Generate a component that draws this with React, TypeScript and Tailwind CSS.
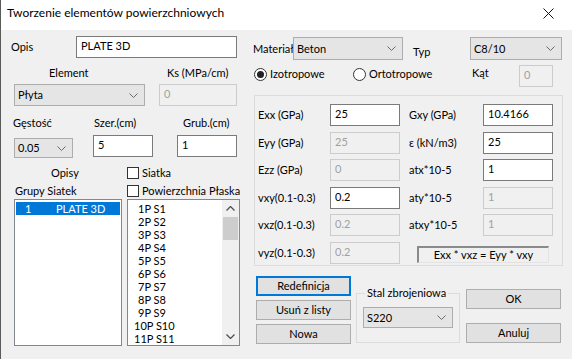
import React from "react";

const Chevron = () => (
  <svg width="9" height="5" viewBox="0 0 9 5" className="shrink-0">
    <polyline points="0.5,0.5 4.5,4.5 8.5,0.5" fill="none" stroke="#6a6a6a" strokeWidth="1" />
  </svg>
);

const Select = ({ value, className }: { value: string; className: string }) => (
  <div
    className={`flex items-center justify-between border border-[#adadad] bg-[#e5e5e5] pl-[3px] pr-[6px] ${className}`}
  >
    <span>{value}</span>
    <Chevron />
  </div>
);

const Field = ({ value, disabled, className }: { value: string; disabled?: boolean; className: string }) => (
  <div
    className={`flex h-[22px] items-center pb-[2px] pl-[4px] ${
      disabled ? "border border-[#cccccc] bg-[#f0f0f0] text-[#a0a0a0]" : "border border-[#7a7a7a] bg-white"
    } ${className}`}
  >
    {value}
  </div>
);

const Check = ({ label }: { label: string }) => (
  <div className="flex items-center">
    <div className="h-[12px] w-[12px] border border-[#333] bg-white" />
    <span className="ml-[3px]">{label}</span>
  </div>
);

const Radio = ({ label, on }: { label: string; on?: boolean }) => (
  <div className="flex items-center">
    <div className="flex h-[13px] w-[13px] items-center justify-center rounded-full border border-[#333] bg-white">
      {on && <div className="h-[7px] w-[7px] rounded-full bg-[#222]" />}
    </div>
    <span className="ml-[3px]">{label}</span>
  </div>
);

const Button = ({ label, focus, className }: { label: string; focus?: boolean; className?: string }) => (
  <div
    className={`flex h-[20px] items-center justify-center bg-[#e1e1e1] ${
      focus ? "border-2 border-[#0078d7]" : "border border-[#adadad]"
    } ${className ?? ""}`}
  >
    {label}
  </div>
);

const params: [string, string, boolean, string, string, boolean][] = [
  ["Exx (GPa)", "25", false, "Gxy (GPa)", "10.4166", false],
  ["Eyy (GPa)", "25", true, "ε (kN/m3)", "25", false],
  ["Ezz (GPa)", "0", true, "atx*10-5", "1", false],
  ["vxy(0.1-0.3)", "0.2", false, "aty*10-5", "1", true],
  ["vxz(0.1-0.3)", "0.2", true, "atxy*10-5", "1", true],
];

const meshes = Array.from({ length: 11 }, (_, i) => `${i + 1}P S${i + 1}`);

export default function App() {
  return (
    <div className="h-[359px] w-[572px] overflow-hidden border-l border-[#5a5a5a] bg-[#f0f0f0] font-['Lato',sans-serif] text-[11px] leading-[14px] text-black">
      {/* title bar */}
      <div className="flex h-[30px] items-center justify-between bg-white pl-[6px] pr-[18px] text-[12px]">
        <span className="pb-[4px]">Tworzenie elementów powierzchniowych</span>
        <svg width="11" height="11" viewBox="0 0 11 11" className="mb-[4px]">
          <path d="M0.5 0.5 L10.5 10.5 M10.5 0.5 L0.5 10.5" stroke="#111" strokeWidth="1" />
        </svg>
      </div>

      <div className="flex">
        {/* left column */}
        <div className="ml-[9px] w-[231px]">
          <div className="mt-[6px] flex h-[22px] items-center">
            <span className="w-[66px] pl-[1px]">Opis</span>
            <Field value="PLATE 3D" className="w-[161px]" />
          </div>
          <div className="mt-[7px] flex h-[16px] items-center">
            <span className="w-[157px] pl-[39px]">Element</span>
            <span>Ks (MPa/cm)</span>
          </div>
          <div className="mt-[3px] flex h-[22px] items-center">
            <Select value="Płyta" className="ml-[4px] h-[22px] w-[131px]" />
            <Field value="0" disabled className="ml-[14px] w-[78px]" />
          </div>
          <div className="mt-[9px] flex h-[16px] items-center">
            <span className="w-[84px] pl-[3px]">Gęstość</span>
            <span className="w-[89px]">Szer.(cm)</span>
            <span>Grub.(cm)</span>
          </div>
          <div className="mt-[4px] flex h-[23px] items-start">
            <Select value="0.05" className="ml-[4px] mt-[3px] h-[20px] w-[59px]" />
            <Field value="5" className="ml-[20px] w-[60px]" />
            <Field value="1" className="ml-[24px] w-[60px]" />
          </div>
          <div className="mt-[6px] flex h-[18px] items-center">
            <span className="w-[117px] pl-[41px]">Opisy</span>
            <Check label="Siatka" />
          </div>
          <div className="flex h-[17px] items-center">
            <span className="w-[117px] pl-[5px]">Grupy Siatek</span>
            <Check label="Powierzchnia Płaska" />
          </div>
          <div className="flex">
            <div className="ml-[4px] h-[147px] w-[108px] border border-[#828790] bg-white pt-[2px]">
              <div className="mx-[1px] flex h-[13px] items-center bg-[#0078d7] text-white">
                <span className="w-[40px] pl-[9px]">1</span>
                <span>PLATE 3D</span>
              </div>
            </div>
            <div className="ml-[5px] flex h-[147px] w-[113px] border border-[#828790] bg-white">
              <div className="flex-1 pt-[2px] leading-[13px]">
                {meshes.map((m, i) => (
                  <div key={m} className={i < 9 ? "h-[13px] pl-[10px]" : "h-[13px] pl-[6px]"}>
                    {m}
                  </div>
                ))}
              </div>
              <div className="flex w-[17px] flex-col bg-[#f0f0f0]">
                <div className="flex h-[17px] items-center justify-center">
                  <svg width="9" height="5" viewBox="0 0 9 5">
                    <polyline points="0.5,4.5 4.5,0.5 8.5,4.5" fill="none" stroke="#505050" strokeWidth="1.3" />
                  </svg>
                </div>
                <div className="mx-[1px] h-[23px] bg-[#cdcdcd]" />
                <div className="flex-1" />
                <div className="flex h-[17px] items-center justify-center">
                  <svg width="9" height="5" viewBox="0 0 9 5">
                    <polyline points="0.5,0.5 4.5,4.5 8.5,0.5" fill="none" stroke="#505050" strokeWidth="1.3" />
                  </svg>
                </div>
              </div>
            </div>
          </div>
        </div>

        {/* right column */}
        <div className="ml-[12px] w-[310px]">
          <div className="mt-[7px] flex h-[23px] items-center">
            <span className="w-[40px]">Materiał</span>
            <Select value="Beton" className="h-[23px] w-[110px]" />
            <span className="ml-[10px] mt-[6px] w-[57px]">Typ</span>
            <Select value="C8/10" className="h-[23px] w-[92px]" />
          </div>
          <div className="mt-[5px] flex h-[22px] items-start">
            <div className="ml-[1px] mt-[2px] w-[99px]">
              <Radio label="Izotropowe" on />
            </div>
            <div className="mt-[2px] w-[119px]">
              <Radio label="Ortotropowe" />
            </div>
            <span className="mt-[1px] w-[47px]">Kąt</span>
            <Field value="0" disabled className="w-[34px]" />
          </div>
          <div className="ml-[1px] mt-[8px] flex h-[171px] w-[309px] flex-col gap-[5.6px] border border-[#dcdcdc] pl-[3px] pt-[8px]">
            {params.map(([l1, v1, d1, l2, v2, d2]) => (
              <div key={l1} className="flex h-[22px] items-center">
                <span className="w-[72px]">{l1}</span>
                <Field value={v1} disabled={d1} className="w-[70px]" />
                <span className="ml-[9px] w-[74px]">{l2}</span>
                <Field value={v2} disabled={d2} className="w-[70px]" />
              </div>
            ))}
            <div className="flex h-[22px] items-center">
              <span className="w-[72px]">vyz(0.1-0.3)</span>
              <Field value="0.2" disabled className="w-[70px]" />
              <div className="ml-[17px] mt-[3px] flex h-[17px] w-[132px] items-center justify-center border-b border-l-2 border-r border-t-2 border-b-[#e3e3e3] border-l-[#8a8a8a] border-r-[#e3e3e3] border-t-[#8a8a8a]">
                Exx * vxz = Eyy * vxy
              </div>
            </div>
          </div>

          <div className="mt-[10px] flex">
            <div className="ml-[3px] flex w-[95px] flex-col gap-[4px]">
              <Button label="Redefinicja" focus />
              <Button label="Usuń z listy" />
              <Button label="Nowa" />
            </div>
            <fieldset className="ml-[5px] mt-[10px] h-[57px] w-[103px] border border-[#dcdcdc] px-[6px]">
              <legend className="ml-[2px] px-[2px]">Stal zbrojeniowa</legend>
              <Select value="S220" className="mt-[7px] h-[21px] w-[90px]" />
            </fieldset>
            <div className="ml-[6px] flex w-[95px] flex-col">
              <Button label="OK" className="mt-[13px]" />
              <Button label="Anuluj" className="mt-[14px]" />
            </div>
          </div>
        </div>
      </div>
    </div>
  );
}
